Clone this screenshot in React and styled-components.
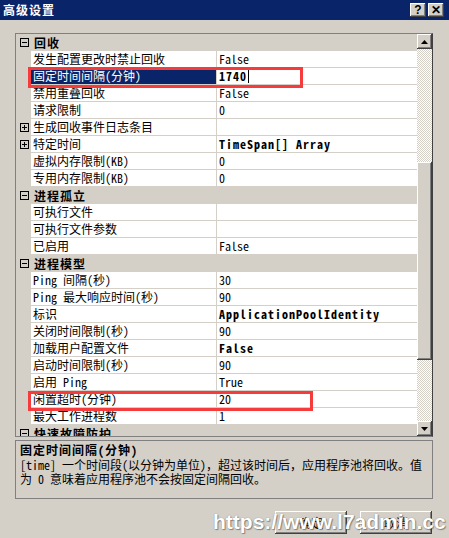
import React from 'react';
import styled, { createGlobalStyle } from 'styled-components';

const FONT = `"Noto Sans Mono CJK SC", "Noto Sans CJK SC", sans-serif`;
const FACE = '#d4d0c8';
const NAVY = '#0a246a';

const GlobalStyle = createGlobalStyle`
  html, body {
    margin: 0;
    padding: 0;
    background: ${FACE};
  }
  body {
    font-family: ${FONT};
    font-size: 12px;
    color: #000;
  }
`;

const raised = `
  box-shadow: inset -1px -1px #404040, inset 1px 1px #ffffff,
    inset -2px -2px #808080, inset 2px 2px ${FACE};
`;

const Window = styled.div`
  position: relative;
  width: 449px;
  height: 538px;
  overflow: hidden;
  display: flex;
  flex-direction: column;
  background: ${FACE};
`;

const TitleBar = styled.div`
  height: 20px;
  flex: none;
  display: flex;
  align-items: center;
  justify-content: space-between;
  padding: 0 5px 0 3px;
  background: ${NAVY};
`;

const Title = styled.span`
  color: #fff;
  font-weight: bold;
  letter-spacing: 1px;
  line-height: 20px;
`;

const TitleButtons = styled.div`
  display: flex;
  gap: 2px;
`;

const TitleButton = styled.div`
  width: 16px;
  height: 14px;
  display: flex;
  align-items: center;
  justify-content: center;
  background: ${FACE};
  font-family: "Liberation Sans", sans-serif;
  font-weight: bold;
  font-size: 12px;
  line-height: 14px;
  ${raised}
`;

const Content = styled.div`
  flex: 1;
  display: flex;
  flex-direction: column;
  padding: 13px 16px 0 15px;
`;

const Grid = styled.div`
  position: relative;
  height: 404px;
  flex: none;
  display: flex;
  box-sizing: border-box;
  border: 1px solid #808080;
  border-right-color: #404040;
`;

const Rows = styled.div`
  flex: 1;
  overflow: hidden;
  display: flex;
  flex-direction: column;
`;

const Row = styled.div`
  flex: none;
  height: 17px;
  display: grid;
  grid-template-columns: 15px 185px 1px 200px;
`;

const Gutter = styled.div`
  background: ${FACE};
  display: flex;
  align-items: center;
  justify-content: center;
  padding-left: 1px;
`;

const Label = styled.div`
  box-sizing: border-box;
  height: 17px;
  padding-left: 2px;
  line-height: 16px;
  white-space: nowrap;
  overflow: hidden;
  background: ${(p) => (p.$selected ? NAVY : '#fff')};
  color: ${(p) => (p.$selected ? '#fff' : '#000')};
  border-bottom: 1px solid ${FACE};
`;

const Divider = styled.div`
  background: ${FACE};
`;

const Value = styled.div`
  box-sizing: border-box;
  height: 17px;
  padding-left: 2px;
  line-height: 16px;
  white-space: nowrap;
  overflow: hidden;
  background: #fff;
  border-bottom: 1px solid ${FACE};
  font-weight: ${(p) => (p.$bold ? 'bold' : 'normal')};
  letter-spacing: ${(p) => (p.$bold ? '1px' : '0')};
  display: flex;
  align-items: center;
`;

const Caret = styled.span`
  width: 1px;
  height: 13px;
  background: #000;
  margin-left: 1px;
`;

const CategoryRow = styled.div`
  flex: none;
  height: 17px;
  display: flex;
  align-items: center;
  background: ${FACE};
`;

const CategoryIcon = styled.div`
  width: 15px;
  display: flex;
  justify-content: center;
  padding-left: 1px;
`;

const CategoryLabel = styled.span`
  padding-left: 2px;
  font-weight: bold;
  letter-spacing: 1px;
  line-height: 17px;
`;

const Scrollbar = styled.div`
  width: 15px;
  flex: none;
  display: flex;
  flex-direction: column;
`;

const ArrowButton = styled.div`
  width: 15px;
  height: 15px;
  flex: none;
  display: flex;
  align-items: center;
  justify-content: center;
  background: ${FACE};
  ${raised}
`;

const Track = styled.div`
  flex: 1;
  display: flex;
  flex-direction: column;
  background: repeating-conic-gradient(#ffffff 0 25%, ${FACE} 0 50%) 0 0 / 2px 2px;
`;

const Thumb = styled.div`
  margin-top: ${(p) => p.$offset}px;
  height: ${(p) => p.$size}px;
  background: ${FACE};
  ${raised}
`;

const Mark = styled.div`
  position: absolute;
  left: ${(p) => p.$x}px;
  top: ${(p) => p.$y}px;
  width: ${(p) => p.$w}px;
  height: ${(p) => p.$h}px;
  border: 3px solid #f53b3b;
  box-sizing: border-box;
  pointer-events: none;
`;

const HelpBox = styled.div`
  margin-top: 3px;
  height: 59px;
  flex: none;
  box-sizing: border-box;
  border: 1px solid #808080;
  padding: 1px 4px 0;
`;

const HelpTitle = styled.div`
  font-weight: bold;
  letter-spacing: 1px;
  line-height: 16px;
`;

const HelpText = styled.div`
  line-height: 14px;
  white-space: nowrap;
`;

const ButtonRow = styled.div`
  display: flex;
  justify-content: flex-end;
  gap: 13px;
  margin-top: 12px;
  padding-right: 1px;
`;

const Button = styled.div`
  width: 72px;
  height: 23px;
  display: flex;
  align-items: center;
  justify-content: center;
  background: ${FACE};
  ${raised}
`;

const Watermark = styled.div`
  position: absolute;
  left: 213px;
  top: 510px;
  font-family: "Liberation Sans", sans-serif;
  font-weight: bold;
  font-size: 21px;
  color: #ffffff;
  text-shadow: 1px 1px 1px rgba(0, 0, 0, 0.35), 0 0 1px #7a7a7a;
  white-space: nowrap;
  pointer-events: none;
`;

const BoxIcon = ({ open }) => (
  <svg width="9" height="9" viewBox="0 0 9 9">
    <rect x="0.5" y="0.5" width="8" height="8" fill="none" stroke="#000" />
    <path d="M2 4.5h5" stroke="#000" />
    {!open && <path d="M4.5 2v5" stroke="#000" />}
  </svg>
);

const Arrow = ({ down }) => (
  <svg width="7" height="4" viewBox="0 0 7 4">
    <path d={down ? 'M0 0h7L3.5 4z' : 'M0 4h7L3.5 0z'} fill="#000" />
  </svg>
);

const rows = [
  { cat: true, label: '回收' },
  { label: '发生配置更改时禁止回收', value: 'False' },
  { label: '固定时间间隔(分钟)', value: '1740', selected: true, bold: true },
  { label: '禁用重叠回收', value: 'False' },
  { label: '请求限制', value: '0' },
  { label: '生成回收事件日志条目', value: '', expand: true },
  { label: '特定时间', value: 'TimeSpan[] Array', expand: true, bold: true },
  { label: '虚拟内存限制(KB)', value: '0' },
  { label: '专用内存限制(KB)', value: '0' },
  { cat: true, label: '进程孤立' },
  { label: '可执行文件', value: '' },
  { label: '可执行文件参数', value: '' },
  { label: '已启用', value: 'False' },
  { cat: true, label: '进程模型' },
  { label: 'Ping 间隔(秒)', value: '30' },
  { label: 'Ping 最大响应时间(秒)', value: '90' },
  { label: '标识', value: 'ApplicationPoolIdentity', bold: true },
  { label: '关闭时间限制(秒)', value: '90' },
  { label: '加载用户配置文件', value: 'False', bold: true },
  { label: '启动时间限制(秒)', value: '90' },
  { label: '启用 Ping', value: 'True' },
  { label: '闲置超时(分钟)', value: '20' },
  { label: '最大工作进程数', value: '1' },
  { cat: true, label: '快速故障防护' },
];

const App = () => (
  <>
    <GlobalStyle />
    <Window>
      <TitleBar>
        <Title>高级设置</Title>
        <TitleButtons>
          <TitleButton>?</TitleButton>
          <TitleButton>✕</TitleButton>
        </TitleButtons>
      </TitleBar>
      <Content>
        <Grid>
          <Rows>
            {rows.map((r) =>
              r.cat ? (
                <CategoryRow key={r.label}>
                  <CategoryIcon>
                    <BoxIcon open />
                  </CategoryIcon>
                  <CategoryLabel>{r.label}</CategoryLabel>
                </CategoryRow>
              ) : (
                <Row key={r.label}>
                  <Gutter>{r.expand && <BoxIcon />}</Gutter>
                  <Label $selected={r.selected}>{r.label}</Label>
                  <Divider />
                  <Value $bold={r.bold}>
                    {r.value}
                    {r.selected && <Caret />}
                  </Value>
                </Row>
              )
            )}
          </Rows>
          <Scrollbar>
            <ArrowButton>
              <Arrow />
            </ArrowButton>
            <Track>
              <Thumb $offset={113} $size={198} />
            </Track>
            <ArrowButton>
              <Arrow down />
            </ArrowButton>
          </Scrollbar>
          <Mark $x={12} $y={33} $w={275} $h={21} />
          <Mark $x={12} $y={357} $w={285} $h={20} />
        </Grid>
        <HelpBox>
          <HelpTitle>固定时间间隔(分钟)</HelpTitle>
          <HelpText>[time] 一个时间段(以分钟为单位)，超过该时间后，应用程序池将回收。值</HelpText>
          <HelpText>为 0 意味着应用程序池不会按固定间隔回收。</HelpText>
        </HelpBox>
        <ButtonRow>
          <Button>确定</Button>
          <Button>取消</Button>
        </ButtonRow>
      </Content>
      <Watermark>https://www.l7admin.cc</Watermark>
    </Window>
  </>
);

export default App;
